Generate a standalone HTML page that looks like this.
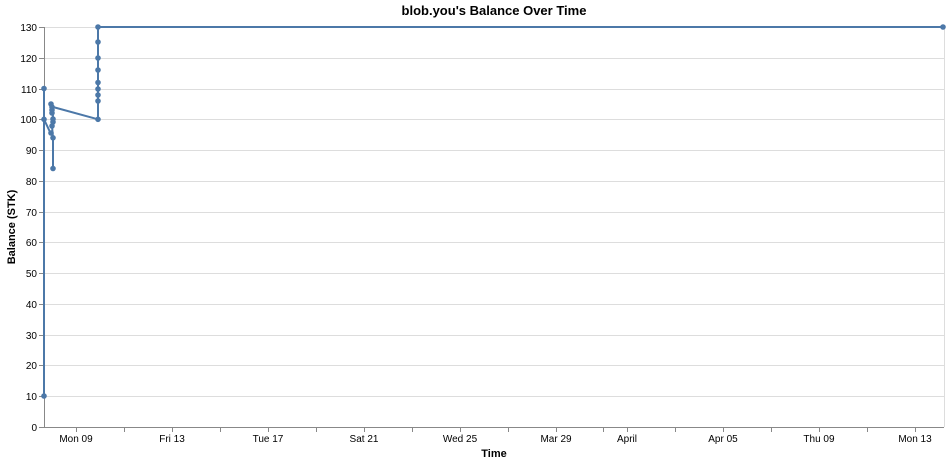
<!DOCTYPE html>
<html><head><style>
html,body{margin:0;padding:0;background:#fff;}
svg{display:block;font-family:"Liberation Sans",Arial,sans-serif;}
</style></head><body>
<svg width="952" height="464" viewBox="0 0 952 464">
<text x="494" y="15" text-anchor="middle" font-size="13" font-weight="bold" fill="#000">blob.you's Balance Over Time</text>
<g stroke="#ddd" stroke-width="1">
<line x1="44" x2="944" y1="27.5" y2="27.5"/>
<line x1="44" x2="944" y1="58.5" y2="58.5"/>
<line x1="44" x2="944" y1="89.5" y2="89.5"/>
<line x1="44" x2="944" y1="119.5" y2="119.5"/>
<line x1="44" x2="944" y1="150.5" y2="150.5"/>
<line x1="44" x2="944" y1="181.5" y2="181.5"/>
<line x1="44" x2="944" y1="212.5" y2="212.5"/>
<line x1="44" x2="944" y1="242.5" y2="242.5"/>
<line x1="44" x2="944" y1="273.5" y2="273.5"/>
<line x1="44" x2="944" y1="304.5" y2="304.5"/>
<line x1="44" x2="944" y1="335.5" y2="335.5"/>
<line x1="44" x2="944" y1="365.5" y2="365.5"/>
<line x1="44" x2="944" y1="396.5" y2="396.5"/>
<line x1="944.5" x2="944.5" y1="27" y2="427"/>
</g>
<g stroke="#888" stroke-width="1">
<line x1="44.5" x2="44.5" y1="27" y2="427"/>
<line x1="44" x2="944" y1="427.5" y2="427.5"/>
<line x1="39" x2="44" y1="27.5" y2="27.5"/><line x1="39" x2="44" y1="58.5" y2="58.5"/><line x1="39" x2="44" y1="89.5" y2="89.5"/><line x1="39" x2="44" y1="119.5" y2="119.5"/><line x1="39" x2="44" y1="150.5" y2="150.5"/><line x1="39" x2="44" y1="181.5" y2="181.5"/><line x1="39" x2="44" y1="212.5" y2="212.5"/><line x1="39" x2="44" y1="242.5" y2="242.5"/><line x1="39" x2="44" y1="273.5" y2="273.5"/><line x1="39" x2="44" y1="304.5" y2="304.5"/><line x1="39" x2="44" y1="335.5" y2="335.5"/><line x1="39" x2="44" y1="365.5" y2="365.5"/><line x1="39" x2="44" y1="396.5" y2="396.5"/><line x1="39" x2="44" y1="427.5" y2="427.5"/>
<line x1="76.5" x2="76.5" y1="427" y2="432"/><line x1="124.5" x2="124.5" y1="427" y2="432"/><line x1="172.5" x2="172.5" y1="427" y2="432"/><line x1="220.5" x2="220.5" y1="427" y2="432"/><line x1="268.5" x2="268.5" y1="427" y2="432"/><line x1="316.5" x2="316.5" y1="427" y2="432"/><line x1="364.5" x2="364.5" y1="427" y2="432"/><line x1="412.5" x2="412.5" y1="427" y2="432"/><line x1="460.5" x2="460.5" y1="427" y2="432"/><line x1="508.5" x2="508.5" y1="427" y2="432"/><line x1="556.5" x2="556.5" y1="427" y2="432"/><line x1="603.5" x2="603.5" y1="427" y2="432"/><line x1="627.5" x2="627.5" y1="427" y2="432"/><line x1="675.5" x2="675.5" y1="427" y2="432"/><line x1="723.5" x2="723.5" y1="427" y2="432"/><line x1="771.5" x2="771.5" y1="427" y2="432"/><line x1="819.5" x2="819.5" y1="427" y2="432"/><line x1="867.5" x2="867.5" y1="427" y2="432"/><line x1="915.5" x2="915.5" y1="427" y2="432"/>
</g>
<g font-size="10" fill="#000" text-anchor="end">
<text x="37" y="31">130</text><text x="37" y="62">120</text><text x="37" y="93">110</text><text x="37" y="123">100</text><text x="37" y="154">90</text><text x="37" y="185">80</text><text x="37" y="216">70</text><text x="37" y="246">60</text><text x="37" y="277">50</text><text x="37" y="308">40</text><text x="37" y="339">30</text><text x="37" y="369">20</text><text x="37" y="400">10</text><text x="37" y="431">0</text>
</g>
<g font-size="10" fill="#000" text-anchor="middle">
<text x="76" y="442">Mon 09</text><text x="172" y="442">Fri 13</text><text x="268" y="442">Tue 17</text><text x="364" y="442">Sat 21</text><text x="460" y="442">Wed 25</text><text x="556" y="442">Mar 29</text><text x="627" y="442">April</text><text x="723" y="442">Apr 05</text><text x="819" y="442">Thu 09</text><text x="915" y="442">Mon 13</text>
</g>
<text x="494" y="457" text-anchor="middle" font-size="11" font-weight="bold">Time</text>
<text transform="translate(15,227) rotate(-90)" text-anchor="middle" font-size="11" font-weight="bold">Balance (STK)</text>
<path d="M44,396 L44,88.5 L44,119.3 L50,132 L52,134 L53,137.8 L53,168.5 L53,137.8 L52,126 L53,122 L52,119 L53,116 L52,112 L53,109 L52,105 L52,103 L53,107 L98,119.3 L98,101 L98,95 L98,89 L98,82.5 L98,70 L98,58 L98,42 L98,27 L943,27" fill="none" stroke="#4c78a8" stroke-width="2" stroke-linejoin="round"/>
<g fill="#4c78a8">
<circle cx="44" cy="396" r="2.8"/><circle cx="44" cy="88.5" r="2.8"/><circle cx="44" cy="119.3" r="2.8"/>
<circle cx="51" cy="104" r="2.8"/><circle cx="52" cy="107" r="2.8"/><circle cx="52" cy="110" r="2.8"/><circle cx="52" cy="113" r="2.8"/><circle cx="53" cy="119" r="2.8"/><circle cx="53" cy="122" r="2.8"/><circle cx="52" cy="126" r="2.8"/><circle cx="51" cy="133" r="2.8"/><circle cx="53" cy="137.8" r="2.8"/><circle cx="53" cy="168.5" r="2.8"/>
<circle cx="98" cy="119.3" r="2.8"/><circle cx="98" cy="101" r="2.8"/><circle cx="98" cy="95" r="2.8"/><circle cx="98" cy="89" r="2.8"/><circle cx="98" cy="82.5" r="2.8"/><circle cx="98" cy="70" r="2.8"/><circle cx="98" cy="58" r="2.8"/><circle cx="98" cy="42" r="2.8"/><circle cx="98" cy="27" r="2.8"/><circle cx="943" cy="27" r="2.8"/>
</g>
</svg>
</body></html>
